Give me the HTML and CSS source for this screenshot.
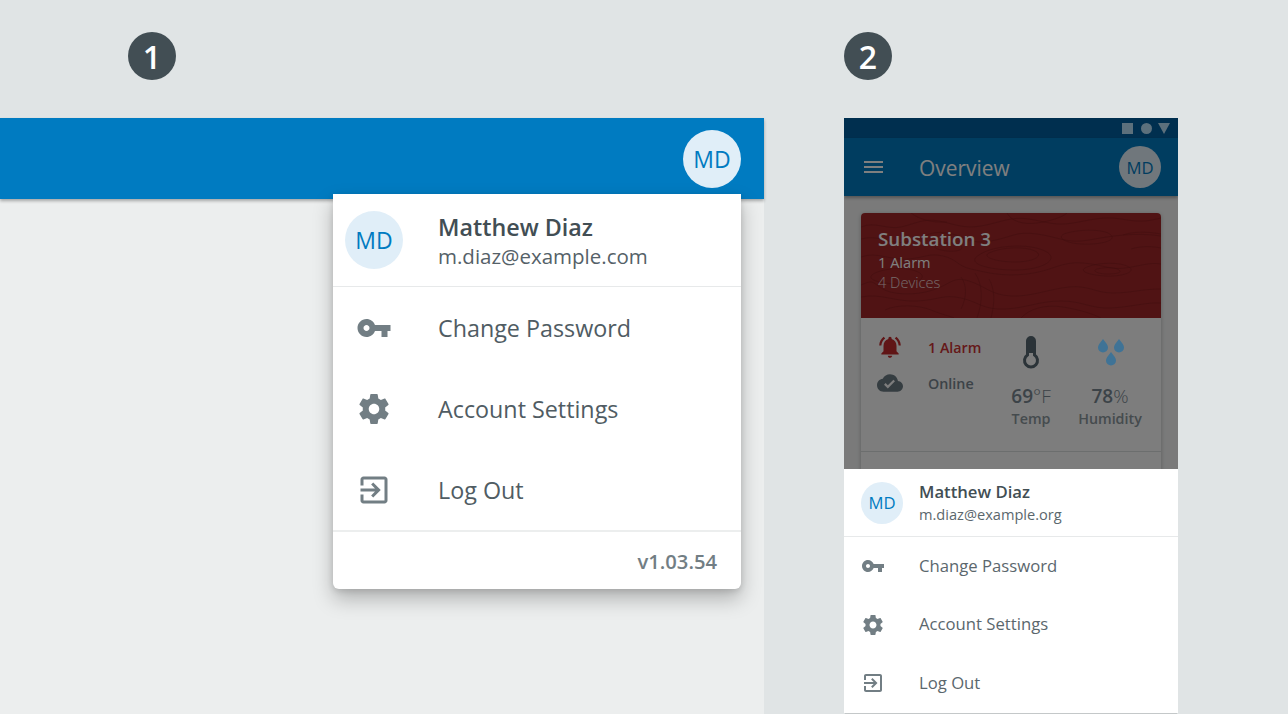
FILE: index.html

```html
<!DOCTYPE html>
<html lang="en">
<head>
    <meta charset="UTF-8">
    <title>User Menu</title>
    <link rel="stylesheet" href="styles.css">
</head>
<body>
    <svg class="icon-defs" width="0" height="0">
        <symbol id="i-key" viewBox="0 0 24 24"><path d="M12.65 10C11.83 7.67 9.61 6 7 6c-3.31 0-6 2.69-6 6s2.69 6 6 6c2.61 0 4.83-1.67 5.65-4H17v4h4v-4h2v-4H12.65zM7 14c-1.1 0-2-.9-2-2s.9-2 2-2 2 .9 2 2-.9 2-2 2z"/></symbol>
        <symbol id="i-gear" viewBox="0 0 24 24"><path d="M19.43 12.98c.04-.32.07-.64.07-.98s-.03-.66-.07-.98l2.11-1.65c.19-.15.24-.42.12-.64l-2-3.46c-.12-.22-.39-.3-.61-.22l-2.49 1c-.52-.4-1.08-.73-1.69-.98l-.38-2.65C14.46 2.18 14.25 2 14 2h-4c-.25 0-.46.18-.49.42l-.38 2.65c-.61.25-1.17.59-1.69.98l-2.49-1c-.23-.09-.49 0-.61.22l-2 3.46c-.13.22-.07.49.12.64l2.11 1.65c-.04.32-.07.65-.07.98s.03.66.07.98l-2.11 1.65c-.19.15-.24.42-.12.64l2 3.46c.12.22.39.3.61.22l2.49-1c.52.4 1.08.73 1.69.98l.38 2.65c.03.24.24.42.49.42h4c.25 0 .46-.18.49-.42l.38-2.65c.61-.25 1.17-.59 1.69-.98l2.49 1c.23.09.49 0 .61-.22l2-3.46c.12-.22.07-.49-.12-.64l-2.11-1.65zM12 15.5c-1.93 0-3.5-1.57-3.5-3.5s1.57-3.5 3.5-3.5 3.5 1.57 3.5 3.5-1.57 3.5-3.5 3.5z"/></symbol>
        <symbol id="i-exit" viewBox="0 0 24 24"><path d="M10.09 15.59L11.5 17l5-5-5-5-1.41 1.41L12.67 11H3v2h9.67l-2.58 2.59zM19 3H5c-1.11 0-2 .9-2 2v4h2V5h14v14H5v-4H3v4c0 1.1.89 2 2 2h14c1.1 0 2-.9 2-2V5c0-1.1-.9-2-2-2z"/></symbol>
    </svg>

    <!-- Desktop -->
    <section class="col col-desktop">
        <div class="step">1</div>
        <div class="desktop">
            <div class="desktop-bar">
                <div class="avatar avatar-lg">MD</div>
            </div>

            <div class="dropdown">
                <div class="user-head">
                    <div class="avatar avatar-lg">MD</div>
                    <div>
                        <div class="user-name">Matthew Diaz</div>
                        <div class="user-mail">m.diaz@example.com</div>
                    </div>
                </div>
                <div class="menu">
                    <div class="menu-item"><svg class="menu-icon"><use href="#i-key"/></svg><span>Change Password</span></div>
                    <div class="menu-item"><svg class="menu-icon"><use href="#i-gear"/></svg><span>Account Settings</span></div>
                    <div class="menu-item"><svg class="menu-icon"><use href="#i-exit"/></svg><span>Log Out</span></div>
                </div>
                <div class="version">v1.03.54</div>
            </div>
        </div>
    </section>

    <!-- Mobile -->
    <section class="col col-mobile">
        <div class="step">2</div>
        <div class="phone">
            <div class="phone-screen">
                <div class="status-bar">
                    <span class="st-square"></span>
                    <span class="st-dot"></span>
                    <span class="st-tri"></span>
                </div>
                <div class="app-bar">
                    <div class="burger"><span></span><span></span><span></span></div>
                    <div class="app-title">Overview</div>
                    <div class="avatar avatar-sm">MD</div>
                </div>

                <div class="card">
                    <div class="card-top">
                        <svg class="topo" viewBox="0 0 300 105" preserveAspectRatio="none">
                            <path d="M0 14c14-6 26 3 40 0s22-9 38-6 24 8 42 5 30-10 48-7 26 7 44 4 30-7 48-4 24 3 40-1"/>
                            <path d="M0 26c18-5 28 6 46 3s20-12 40-9 22 12 44 8 24-10 46-7 30 10 52 6 46-8 72-4"/>
                            <path d="M128 40c12-6 36-7 46-2s-2 11-20 11-34-5-26-9z"/>
                            <path d="M118 42c14-10 50-12 66-4s-2 19-30 19-50-7-36-15z"/>
                            <path d="M0 44c16-6 30 4 48 2s20-6 34-3 14 10 28 13 30 8 56 5 34-13 56-11 26 7 42 5 24-6 36-4"/>
                            <path d="M206 20c14-4 38-4 44 2s-12 10-30 9-26-8-14-11z"/>
                            <path d="M14 60c16-7 40-5 46 1s-10 11-26 10-32-5-20-11z"/>
                            <path d="M0 72c12-5 10-4 20 3s34 8 52 2 20-14 36-9 22 14 42 15 38-7 58-9 26 6 44 6 28-4 48-4"/>
                            <path d="M0 84c20-4 34 5 56 4s26-7 44-3 22 12 44 11 34-8 56-8 30 8 50 7 36-6 50-5"/>
                            <path d="M226 54c12-5 34-5 42 0s-8 10-24 9-28-5-18-9z"/>
                            <path d="M236 56c8-2 18-2 22 1s-4 4-12 4-16-3-10-5z"/>
                            <path d="M24 97c12-6 34-5 46 0s26 8 22 8M160 105c8-9 24-14 42-11s30 7 38 11"/>
                            <path d="M50 0c8 6 20 10 36 9M146 0c4 8 16 12 30 10s26-6 30-10"/>
                            <path d="M76 32c8-3 20-3 24 1s-6 6-14 5-16-3-10-6zM262 22c8-3 22-4 38-1M270 36c10-3 20-3 30-1"/>
                            <path d="M100 64c6 8 6 20 0 32M114 60c8 12 8 28 2 45M128 66c6 10 6 24 2 39"/>
                        </svg>
                        <div class="card-title">Substation 3</div>
                        <div class="card-line">1 Alarm</div>
                        <div class="card-line card-line-dim">4 Devices</div>
                    </div>
                    <div class="card-body">
                        <div class="stat-list">
                            <div class="stat-row stat-alarm">
                                <svg class="stat-icon" viewBox="0 0 24 24"><path d="M7.58 4.08L6.15 2.65C3.75 4.48 2.17 7.3 2.03 10.5h2c.15-2.65 1.51-4.97 3.55-6.42zm12.39 6.42h2c-.15-3.2-1.73-6.02-4.12-7.85l-1.42 1.43c2.02 1.45 3.39 3.77 3.54 6.42zM18 11c0-3.07-1.64-5.64-4.5-6.32V4c0-.83-.67-1.5-1.5-1.5s-1.5.67-1.5 1.5v.68C7.63 5.36 6 7.92 6 11v5l-2 2v1h16v-1l-2-2v-5zm-6 11c.14 0 .27-.01.4-.04.65-.14 1.18-.58 1.44-1.18.1-.24.15-.5.15-.78h-4c.01 1.1.9 2 2.01 2z"/></svg>
                                <span>1 Alarm</span>
                            </div>
                            <div class="stat-row">
                                <svg class="stat-icon" viewBox="0 0 24 24"><path d="M19.35 10.04C18.67 6.59 15.64 4 12 4 9.11 4 6.6 5.64 5.35 8.04 2.34 8.36 0 10.91 0 14c0 3.31 2.69 6 6 6h13c2.76 0 5-2.24 5-5 0-2.64-2.05-4.78-4.65-4.96zM10 17l-3.5-3.5 1.41-1.41L10 14.17 15.18 9l1.41 1.41L10 17z"/></svg>
                                <span>Online</span>
                            </div>
                        </div>
                        <div class="reading reading-temp">
                            <svg class="reading-icon" viewBox="0 0 36 36"><path d="M18 3.500a3.500 3.500 0 0 1 3.500 3.500V21a6.500 6.500 0 1 1-7 0V7A3.500 3.500 0 0 1 18 3.500z" fill="none" stroke="#566670" stroke-width="3"/><path d="M14.500 7a3.500 3.500 0 0 1 7 0V19h-7z" fill="#566670"/></svg>
                            <div class="reading-val">69<small>°F</small></div>
                            <div class="reading-label">Temp</div>
                        </div>
                        <div class="reading reading-hum">
                            <svg class="reading-icon drops" viewBox="0 0 36 36"><path class="drop" d="M11 5c3 4 5 6 5 8.500a5 5 0 0 1-10 0c0-2.500 2-4.500 5-8.500z"/><path class="drop" d="M27 5c3 4 5 6 5 8.500a5 5 0 0 1-10 0c0-2.500 2-4.500 5-8.500z"/><path class="drop" d="M19 18c3 4 5 6 5 8.500a5 5 0 0 1-10 0c0-2.500 2-4.500 5-8.500z"/></svg>
                            <div class="reading-val">78<small>%</small></div>
                            <div class="reading-label">Humidity</div>
                        </div>
                    </div>
                    <div class="card-foot"></div>
                </div>

                <div class="scrim"></div>
            </div>

            <div class="sheet">
                <div class="sheet-head">
                    <div class="avatar avatar-sm">MD</div>
                    <div>
                        <div class="sheet-name">Matthew Diaz</div>
                        <div class="sheet-mail">m.diaz@example.org</div>
                    </div>
                </div>
                <div class="sheet-item"><svg class="sheet-icon"><use href="#i-key"/></svg><span>Change Password</span></div>
                <div class="sheet-item"><svg class="sheet-icon"><use href="#i-gear"/></svg><span>Account Settings</span></div>
                <div class="sheet-item"><svg class="sheet-icon"><use href="#i-exit"/></svg><span>Log Out</span></div>
            </div>
        </div>
    </section>
</body>
</html>
```

FILE: styles.css

```css
* {
    margin: 0;
    padding: 0;
    box-sizing: border-box;
}

body {
    width: 1288px;
    height: 714px;
    overflow: hidden;
    display: flex;
    font-family: "Open Sans", sans-serif;
    color: #424e54;
    background-color: #e0e4e5;
}

.icon-defs {
    position: absolute;
}

.col {
    display: flex;
    flex-direction: column;
}

.col-desktop {
    width: 764px;
}

.col-mobile {
    width: 334px;
    margin-left: 80px;
}

.step {
    width: 48px;
    height: 48px;
    margin-top: 32px;
    margin-bottom: 38px;
    flex-shrink: 0;
    border-radius: 50%;
    display: flex;
    align-items: center;
    justify-content: center;
    background-color: #424e54;
    color: white;
    font-size: 32px;
    font-weight: 600;
}

.col-desktop .step {
    margin-left: 128px;
}

.avatar {
    flex-shrink: 0;
    border-radius: 50%;
    display: flex;
    align-items: center;
    justify-content: center;
    background-color: #e0eef8;
    color: #007bc1;
}

.avatar-lg {
    width: 58px;
    height: 58px;
    font-size: 23px;
}

.avatar-sm {
    width: 42px;
    height: 42px;
    font-size: 16.700px;
}

/* Desktop */
.desktop {
    position: relative;
    flex: 1;
    background-color: #eceeee;
}

.desktop-bar {
    height: 81px;
    padding: 12px 23px 0 0;
    display: flex;
    justify-content: flex-end;
    background-color: #007bc1;
    box-shadow: 0 2px 3px rgba(0, 0, 0, 0.3);
}

.dropdown {
    position: absolute;
    top: 76px;
    right: 23px;
    width: 408px;
    height: 395px;
    display: flex;
    flex-direction: column;
    background-color: white;
    border-radius: 0 0 6px 6px;
    box-shadow: 0 10px 20px rgba(0, 0, 0, 0.25), 0 2px 6px rgba(0, 0, 0, 0.12);
}

.user-head {
    height: 93px;
    padding-left: 12px;
    display: flex;
    align-items: center;
    gap: 35px;
    border-bottom: 1px solid #e7e9ea;
}

.user-name {
    font-size: 23.300px;
    font-weight: 600;
    line-height: 32px;
}

.user-mail {
    font-size: 20.500px;
    line-height: 27px;
    color: #556168;
}

.menu {
    height: 243px;
    display: flex;
    flex-direction: column;
    justify-content: center;
}

.menu-item {
    height: 81px;
    padding-left: 23px;
    display: flex;
    align-items: center;
    gap: 46px;
    font-size: 23.300px;
    color: #505c63;
}

.menu-icon {
    width: 36px;
    height: 36px;
    flex-shrink: 0;
    fill: #727e84;
}

.version {
    flex: 1;
    padding-right: 24px;
    display: flex;
    align-items: center;
    justify-content: flex-end;
    border-top: 2px solid #eceeee;
    font-size: 20.200px;
    font-weight: 600;
    color: #727e84;
}

/* Mobile */
.phone {
    flex: 1;
    margin-bottom: 2px;
    display: flex;
    flex-direction: column;
    background-color: white;
    box-shadow: 0 2px 1px -1px rgba(0, 0, 0, 0.12);
}

.phone-screen {
    position: relative;
    height: 351px;
    overflow: hidden;
    background-color: #f4f5f5;
}

.status-bar {
    height: 20px;
    padding-right: 8px;
    display: flex;
    align-items: center;
    justify-content: flex-end;
    background-color: #005e9e;
}

.st-square {
    width: 11px;
    height: 11px;
    background-color: #b8e0f8;
}

.st-dot {
    width: 11px;
    height: 11px;
    margin-left: 8px;
    border-radius: 50%;
    background-color: #b8e0f8;
}

.st-tri {
    width: 0;
    height: 0;
    margin-left: 6px;
    border-left: 6px solid transparent;
    border-right: 6px solid transparent;
    border-top: 11px solid #b8e0f8;
}

.app-bar {
    height: 58px;
    padding: 0 17px;
    display: flex;
    align-items: center;
    background-color: #007bc1;
    box-shadow: 0 2px 3px rgba(0, 0, 0, 0.3);
}

.burger {
    width: 19px;
    margin-left: 3px;
    display: flex;
    flex-direction: column;
    gap: 3px;
}

.burger span {
    height: 2px;
    background-color: white;
}

.app-title {
    flex: 1;
    margin: 2px 0 0 36px;
    font-size: 20.900px;
    color: white;
}

.card {
    width: 300px;
    margin: 17px auto 0;
    border-radius: 4px 4px 0 0;
    background-color: #fafafa;
    box-shadow: 0 1px 4px rgba(0, 0, 0, 0.25);
}

.card-top {
    position: relative;
    height: 105px;
    padding: 13px 16px 0 17px;
    overflow: hidden;
    border-radius: 4px 4px 0 0;
    background-color: #a02628;
    color: white;
}

.topo {
    position: absolute;
    top: 0;
    left: 0;
    width: 100%;
    height: 100%;
    fill: none;
    stroke: #801c1e;
    stroke-width: 0.5;
}

.card-title {
    position: relative;
    font-size: 18.800px;
    font-weight: 600;
    line-height: 26px;
}

.card-line {
    position: relative;
    font-size: 14.600px;
    line-height: 20px;
}

.card-line-dim {
    font-weight: 300;
    opacity: 0.8;
}

.card-body {
    height: 134px;
    padding: 16px 0 0 16px;
    display: flex;
    border-bottom: 1px solid #d8dcdc;
}

.stat-list {
    width: 128px;
    font-size: 14.300px;
    font-weight: 600;
}

.stat-row {
    height: 36px;
    display: flex;
    align-items: flex-start;
    gap: 25px;
    line-height: 28px;
    color: #788690;
}

.stat-alarm {
    color: #ca3234;
}

.stat-icon {
    width: 26px;
    height: 26px;
    flex-shrink: 0;
    fill: #6b7a83;
}

.stat-alarm .stat-icon {
    fill: #c02a2c;
}

.reading {
    width: 72px;
    text-align: center;
}

.reading-temp {
    width: 52px;
}

.reading-hum {
    margin-left: 17px;
}

.reading-icon {
    display: block;
    width: 36px;
    height: 36px;
    margin: 0 auto;
}

/* the drops keep their colour through the scrim */
.drops {
    position: relative;
    z-index: 1;
}

.drop {
    fill: #3f7396;
}

.reading-val {
    margin-top: 13px;
    font-size: 19px;
    font-weight: 600;
    line-height: 26px;
    color: #788690;
    white-space: nowrap;
}

.reading-val small {
    font-size: 19px;
    font-weight: 300;
}

.reading-label {
    font-size: 14.300px;
    font-weight: 600;
    line-height: 20px;
    color: #8a969c;
    white-space: nowrap;
}

.card-foot {
    height: 40px;
}

.scrim {
    position: absolute;
    top: 0;
    left: 0;
    right: 0;
    bottom: 0;
    background-color: rgba(0, 0, 0, 0.5);
}

.sheet {
    flex: 1;
    display: flex;
    flex-direction: column;
}

.sheet-head {
    height: 68px;
    padding-left: 17px;
    display: flex;
    align-items: center;
    gap: 16px;
    border-bottom: 1px solid #e7e9ea;
}

.sheet-name {
    margin-bottom: 1px;
    font-size: 16.700px;
    font-weight: 600;
    line-height: 22px;
}

.sheet-mail {
    font-size: 14.600px;
    line-height: 21px;
    color: #5b676d;
}

.sheet-item {
    height: 58.500px;
    padding-left: 17px;
    display: flex;
    align-items: center;
    gap: 34px;
    font-size: 16.700px;
    color: #5b676d;
}

.sheet-item span {
    margin-bottom: 2px;
}

.sheet-icon {
    width: 24px;
    height: 24px;
    flex-shrink: 0;
    fill: #727e84;
}
```
